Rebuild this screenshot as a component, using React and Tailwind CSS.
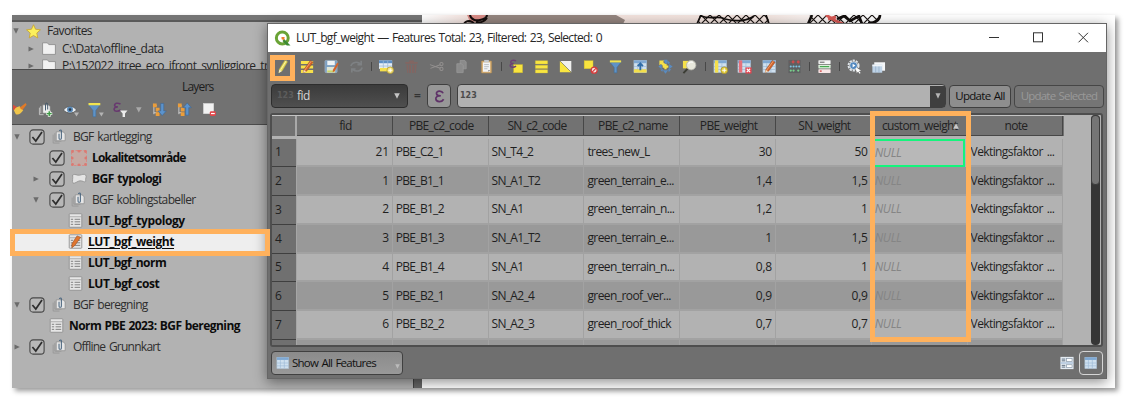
import React from "react";

const Svg = ({ s = 16, children, className = "" }) => (
  <svg width={s} height={s} viewBox="0 0 16 16" fill="none" className={"shrink-0 " + className}>
    {children}
  </svg>
);

const pencil = (c = "#d2622a", e = "#f0a070") => (
  <>
    <path d="M4 11.5 L11 1.5 L14 3.5 L7 13 L3.5 14.5Z" fill={c} stroke="#8a4a28" strokeWidth=".5" />
    <path d="M5 12 L12 2.3" stroke={e} strokeWidth="1" />
    <path d="M3.4 14.6 L4 11.8 L6.8 13Z" fill="#f3dfc0" />
  </>
);
const sheet = (
  <>
    <rect x="1" y="1.5" width="13.5" height="13" fill="#cfe0ef" stroke="#a9bccd" strokeWidth=".6" />
    <rect x="1" y="1.5" width="13.5" height="3" fill="#7fa8d3" />
    <path d="M5 4.5V14M9.5 4.5V14M1 8H14.5M1 11.2H14.5" stroke="#9bb8d4" strokeWidth=".7" />
  </>
);

const TOOLS = {
  edit: (
    <>
      <path d="M4.5 11 L10.5 1.2 L13.5 2.8 L7.8 12.6 L4 15Z" fill="#e6d954" stroke="#a99e45" strokeWidth=".5" />
      <path d="M6 11.5 L12 1.9" stroke="#fbf6ae" strokeWidth="1" />
      <path d="M4 15 L4.5 11.5 L7.4 12.9Z" fill="#f4ecd2" />
    </>
  ),
  multi: (
    <>
      <path d="M1 2.2H14V5.4H1ZM1 6.9H14V10.1H1ZM1 11.6H14V14.8H1Z" fill="#f7e04a" />
      {pencil()}
    </>
  ),
  save: (
    <>
      <rect x="1" y="1.5" width="13" height="13" rx="1" fill="#7c9fc2" stroke="#a5b8ca" strokeWidth=".6" />
      <rect x="3.5" y="2" width="8" height="4.5" fill="#eef2f5" />
      <rect x="3" y="8.5" width="9" height="6" fill="#dfe4d6" />
      <path d="M3.5 12.2H11.5V14.2H3.5Z" fill="#c9d66b" />
      <path d="M9.5 11.5L14 4L15.8 5L11.5 12.8L9.3 14Z" fill="#d2622a" />
    </>
  ),
  reload: (
    <g stroke="#84888b" strokeWidth="1.7">
      <path d="M2 7.5C3 3.5 9 2 12.5 5.5M13 1.8V6H9M14 9C13 13 7.5 14.2 3.8 11M3 14.5V10.6H7" />
    </g>
  ),
  addf: (
    <>
      <rect x="0" y="1.5" width="14" height="9" fill="#e6eef5" />
      <rect x="0" y="1.5" width="14" height="3" fill="#5d8fc4" />
      <path d="M0 7.5H14M4.6 2V11M9.3 2V11" stroke="#9cb9d6" strokeWidth=".8" />
      <path d="M1 9.5H11V13.2H1Z" fill="#f4df4a" />
      <circle cx="12" cy="12" r="3.5" fill="#f3e27e" stroke="#b39a2c" strokeWidth=".8" />
      <path d="M12 10V14M10 12H14" stroke="#fff" strokeWidth="1" />
    </>
  ),
  trash: (
    <g fill="#8a635e">
      <path d="M1.5 3.2H14.5V5H1.5ZM5.5 1.5H10.5V3.5H5.5Z" />
      <path d="M2.5 6H4.5V15H3.4ZM5.5 6H7.4V15H5.5ZM8.6 6H10.5V15H8.6ZM11.5 6H13.5L12.6 15H11.5Z" />
    </g>
  ),
  cut: (
    <g stroke="#a09c9b" strokeWidth="1.1">
      <path d="M1 6L12 9.8M1.5 10L12 6.2" />
      <circle cx="13.3" cy="5.4" r="1.7" />
      <circle cx="13.3" cy="10.6" r="1.7" />
    </g>
  ),
  copy: (
    <g fill="#959595" stroke="#adadad" strokeWidth=".7">
      <path d="M6.5 1.5H11.5L13 3.2V10.5H6.5Z" />
      <path d="M3 5H8L9.8 7V14.5H3Z" />
    </g>
  ),
  paste: (
    <>
      <rect x="2.5" y="2" width="11" height="13" rx=".6" fill="#d7ae72" stroke="#a88856" strokeWidth=".6" />
      <rect x="4.2" y="3.6" width="7.6" height="10" fill="#f3f4f5" />
      <rect x="5.5" y="1" width="5" height="2.6" fill="#c6c9cc" />
      <path d="M5.5 6H10.5M5.5 8.2H10.5M5.5 10.4H9" stroke="#a6abb0" strokeWidth=".8" />
      <path d="M10 13.6V11.6H11.8Z" fill="#777" />
    </>
  ),
  selExpr: (
    <>
      <rect x="5" y="6" width="9.5" height="8.7" fill="#f9e43e" stroke="#c7b52f" strokeWidth=".5" />
      <path d="M7.5 2C5 .6 1.3 1.4 2 3.7C2.4 4.7 4 4.8 5 4.8C2.5 4.8 .8 5.6 1.3 7.5C1.8 9.3 5.5 9.1 7.5 7.6" stroke="#6d3f74" strokeWidth="1.6" />
    </>
  ),
  selAll: <path d="M1.5 1.8H14.5V5.2H1.5ZM1.5 6.6H14.5V10H1.5ZM1.5 11.4H14.5V14.8H1.5Z" fill="#f9e640" stroke="#d4c238" strokeWidth=".4" />,
  invert: (
    <>
      <path d="M2 2H14.2V14.2Z" fill="#f0f0ee" />
      <path d="M2 2V14.2H14.2Z" fill="#f9e640" />
      <path d="M2 2L14.2 14.2" stroke="#6b6b60" strokeWidth=".6" />
    </>
  ),
  desel: (
    <>
      <rect x="1.2" y="1.8" width="9.5" height="8.6" fill="#f9e43e" stroke="#c7b52f" strokeWidth=".4" />
      <circle cx="11.9" cy="11.9" r="3.2" fill="#f3dede" stroke="#d63b3b" strokeWidth="1.3" />
      <path d="M9.8 14L14 9.8" stroke="#d63b3b" strokeWidth="1.2" />
    </>
  ),
  filter: (
    <>
      <path d="M2.2 3.5H13.8L9.5 9V14.7H6.6V9Z" fill="#5f93c6" stroke="#3f6f9f" strokeWidth=".6" />
      <rect x="2" y="1.5" width="12" height="2.2" fill="#f2e44f" />
    </>
  ),
  top: (
    <>
      {sheet}
      <rect x="1" y="11" width="13.5" height="3.5" fill="#f4df4a" />
      <path d="M7.8 12V5.2M5 7.6L7.8 4.6L10.6 7.6" stroke="#2f6ca8" strokeWidth="1.9" />
    </>
  ),
  pan: (
    <>
      <path d="M8 5V11M5 8H11" stroke="#f6e14a" strokeWidth="2.4" />
      <path d="M10.2 1.6L13 4.2L10.4 5.5ZM11.8 5.2L15.6 8L11.8 10.8ZM5.2 12L8 15.6L10.8 12ZM4 5.2L.4 8L4 10.8ZM10.8 10.3L14 11L11.5 14ZM6 .9H10V4L8 5.6ZM2.4 11.5L5.5 10.6L4.6 13.6Z" fill="#5a8bc0" />
      <path d="M1.5 1.5H6.6L5.4 3.2L8.4 6.2L6.2 8.2L3.2 5.2L1.5 6.6Z" fill="#f6e14a" />
    </>
  ),
  zoomsel: (
    <>
      <rect x="1" y="2" width="7" height="8" fill="#f6e14a" />
      <path d="M5.8 10.5L1.5 15" stroke="#3c3d35" strokeWidth="2.1" />
      <circle cx="9.8" cy="6.6" r="5" fill="#e8e8dc" stroke="#b5b6ac" strokeWidth=".9" />
      <path d="M7 5C8 3.2 10 3 11.5 3.6" stroke="#fff" strokeWidth="1.2" />
    </>
  ),
  newField: (
    <>
      {sheet}
      <rect x="2" y="1.5" width="3.6" height="13" fill="#f4df4a" />
      <circle cx="12" cy="12" r="3.6" fill="#e5cf3d" stroke="#a58f29" strokeWidth=".8" />
      <path d="M12 9.8V14.2M9.8 12H14.2" stroke="#fff" strokeWidth="1" />
    </>
  ),
  delField: (
    <>
      {sheet}
      <rect x="2" y="1.5" width="3.6" height="13" fill="#e5717b" />
      <rect x="9" y="9" width="6.5" height="6.5" fill="#e3444f" />
      <path d="M10.4 10.4L14 14M14 10.4L10.4 14" stroke="#fff" strokeWidth="1.2" />
    </>
  ),
  organize: (
    <>
      {sheet}
      {pencil()}
    </>
  ),
  calc: (
    <>
      <rect x="1.5" y="1" width="13" height="14" fill="#5e6062" />
      <g fill="#e24b4b"><circle cx="6.5" cy="3.2" r="1.5" /><circle cx="12" cy="3.2" r="1.5" /></g>
      <path d="M2 3.2H14" stroke="#8e5252" strokeWidth=".6" />
      <g fill="#7fc4e0"><circle cx="4" cy="8" r="1.1" /><circle cx="7" cy="8" r="1.1" /><circle cx="10" cy="8" r="1.1" /><circle cx="13" cy="8" r="1.1" /></g>
      <g fill="#79d08b"><circle cx="4" cy="12.3" r="1.2" /><circle cx="7" cy="12.3" r="1.2" /><circle cx="12" cy="12.3" r="1.2" /></g>
    </>
  ),
  cond: (
    <>
      <rect x="1.5" y="1.4" width="13" height="3.8" rx=".4" fill="#f4f4f4" />
      <rect x="1.5" y="6.2" width="13" height="3.8" rx=".4" fill="#ddf0dc" />
      <rect x="1.5" y="11" width="13" height="3.8" rx=".4" fill="#f8e6e6" />
      <path d="M3 3.4H8" stroke="#555" strokeWidth="1" />
      <path d="M3 8.1H13" stroke="#46a94f" strokeWidth="1.3" />
      <path d="M3 12.9H5" stroke="#c33" strokeWidth="1.3" />
    </>
  ),
  action: (
    <>
      <circle cx="7" cy="7" r="5.4" stroke="#dfe5ea" strokeWidth="2" strokeDasharray="2.4 1" />
      <circle cx="7" cy="7" r="4.4" fill="#e9eef3" />
      <circle cx="7" cy="7" r="3.6" fill="#5288bf" />
      <path d="M6 5L9 7L6 9Z" fill="#fff" />
      <path d="M9.5 9L15 12.2L12.7 12.7L14.5 15L13.4 15.6L11.8 13.3L10.4 14.8Z" fill="#fff" />
    </>
  ),
  dock: (
    <>
      <rect x="2.4" y="3.5" width="11.5" height="9" fill="#f4f6f8" />
      <rect x=".4" y="6" width="10.5" height="8.6" fill="#bed3e7" />
      <rect x=".4" y="6" width="10.5" height="1.8" fill="#eef3f8" />
      <path d="M3.9 8V14.6M7.4 8V14.6" stroke="#8fa9c2" strokeWidth=".7" />
    </>
  ),
};

const ORDER = [
  "edit", "multi", "save", "reload", "|", "addf", "trash", "cut", "copy", "paste", "|",
  "selExpr", "selAll", "invert", "desel", "filter", "top", "pan", "zoomsel", "|",
  "newField", "delField", "organize", "calc", "|", "cond", "|", "action", "dock",
];

const Arrow = ({ open, className = "" }) => (
  <svg width="6" height="6" viewBox="0 0 6 6" className={"shrink-0 " + className}>
    {open === false ? <path d="M.5 .5L5.8 3L.5 5.5Z" fill="#6b6b6b" /> : <path d="M.3 .3H5.7L3 5.7Z" fill="#6b6b6b" />}
  </svg>
);

const Check = () => (
  <Svg s={16}>
    <rect x=".9" y=".9" width="14.2" height="14.2" rx="3.2" fill="#b7b7b7" stroke="#484848" strokeWidth="1.1" />
    <path d="M3.4 8L6.8 12L13 3" stroke="#2d2d2d" strokeWidth="1.7" />
  </Svg>
);

const Group = () => (
  <Svg s={15}>
    <path d="M1.2 6V15H8M3 4.5V13H10" stroke="#979797" strokeWidth=".9" />
    <path d="M4.5 3H11.8L14 5V12.5H4.5Z" fill="#e6e6e6" stroke="#8b8b8b" strokeWidth=".8" />
    <path d="M7.5 5V9.8C7.5 11.3 10 11.3 10 9.8V2.2C10 .6 8 .6 8 2.2" stroke="#49657f" strokeWidth="1.1" />
  </Svg>
);

const TableIcon = ({ editing }) => (
  <Svg s={15}>
    <rect x="1.3" y=".8" width="13.4" height="14.4" rx=".8" fill="#e6e6e6" stroke="#8d8d8d" strokeWidth=".9" />
    <path d="M1.3 4H14.7" stroke="#a2a2a2" strokeWidth=".9" />
    <path d="M3 6.7H5.5M7 6.7H13M3 9.4H5.5M7 9.4H13M3 12.1H5.5M7 12.1H13" stroke="#7b7b7b" strokeWidth="1" />
    {editing && <path d="M4.2 10.5L9.6 2L13.5 3.5L7.5 12L4 14.8Z" fill="#e0752e" stroke="#944a1e" strokeWidth=".6" />}
  </Svg>
);

const Area = () => (
  <Svg s={16}>
    <rect x=".5" y=".5" width="15" height="15" fill="#c4aaa4" stroke="#d98a84" strokeDasharray="2.4 1.6" />
    <g fill="#da7a73">
      <circle cx="1.5" cy="1.5" r="1.4" /><circle cx="8" cy="1" r="1.6" /><circle cx="14.5" cy="1.5" r="1.4" />
      <circle cx="1" cy="8" r="1.6" /><circle cx="15" cy="8" r="1.6" />
      <circle cx="1.5" cy="14.5" r="1.4" /><circle cx="8" cy="15" r="1.6" /><circle cx="14.5" cy="14.5" r="1.4" />
    </g>
  </Svg>
);

const Poly = () => (
  <Svg s={16}>
    <path d="M1.5 4C4 2.5 6 4.6 8.4 4.2C11 3.8 13 2.4 14.8 4.2C15.8 6 14 7.5 14.8 10.4C14 12 11.5 9.5 9 9.8C6.5 10 4.5 12.5 2 12.3C.6 10 2.5 7 1.5 4Z" fill="#e4e4e4" stroke="#8f8f8f" strokeWidth=".8" />
  </Svg>
);

const Folder = () => (
  <svg width="14" height="13" viewBox="0 0 14 13" className="shrink-0">
    <path d="M.6 .8H5.4L6.8 2.6H13.4V12.4H.6Z" fill="#f1f1f1" stroke="#858585" strokeWidth=".8" />
  </svg>
);

const Row = ({ pad, children }) => <div className={"flex h-[21.05px] shrink-0 items-center " + pad}>{children}</div>;

const LayerTools = () => (
  <div className="flex h-[30px] items-center pt-px">
    <div className="w-[25px] pl-px">
      <Svg s={15}>
        <path d="M0 3L6 6L3 10L0 8Z" fill="#d64d3c" />
        <path d="M1 9C3 5 5 5.5 7 4.5L11 8.5C9 12 6 14 3 13Z" fill="#f0c54a" />
        <path d="M7 6L13.5 1L14.5 3L10 8.5Z" fill="#e07a28" />
      </Svg>
    </div>
    <div className="w-[25px] pl-px">
      <Svg s={15}>
        <path d="M1.5 6V13.5H6M3 4.5V12" stroke="#c3c3c3" strokeWidth="1" />
        <path d="M5 3H11L13 5V12H5Z" fill="#eee" stroke="#777" strokeWidth=".7" />
        <path d="M8 9V2.5C8 .8 10.3 .8 10.3 2.5V8" stroke="#3d5469" strokeWidth="1" />
        <path d="M12 9.2V15.6M8.8 12.4H15.2" stroke="#e6f4e6" strokeWidth="3" />
        <path d="M12 9.8V15M9.4 12.4H14.6" stroke="#3f9a46" strokeWidth="1.5" />
      </Svg>
    </div>
    <div className="w-[25px] pl-px">
      <Svg s={16}>
        <path d="M.5 8C3 3.5 11 3.3 13.5 8C11 12 3 12 .5 8Z" fill="#e8edf1" stroke="#555" strokeWidth=".9" />
        <circle cx="7" cy="7.6" r="3" fill="#5b8bb9" />
        <circle cx="7" cy="7.6" r="1.3" fill="#26384a" />
        <path d="M11 10.5H16L13.5 14.5Z" fill="#b4b4b4" />
      </Svg>
    </div>
    <div className="w-[25px] pl-px">
      <Svg s={16}>
        <path d="M.6 3H12L7.8 8.5V14.7H5V8.5Z" fill="#5f93c6" stroke="#3f6f9f" strokeWidth=".5" />
        <rect x=".5" y="1" width="11.8" height="2.3" fill="#f2e44f" />
        <path d="M11 10.5H15.8L13.4 14.5Z" fill="#b4b4b4" />
      </Svg>
    </div>
    <div className="w-[22px] pl-px">
      <Svg s={16}>
        <path d="M7.5 2.2C5 .4 1 1.2 1.7 3.7C2 4.7 3.6 5 4.8 4.9C2.5 5 .8 6 1.2 7.8C1.7 9.9 5.6 9.4 7.6 8" stroke="#68396f" strokeWidth="1.6" />
        <path d="M7 8.5H14.5L12 11.6V15H9.6V11.6Z" fill="#ececec" />
      </Svg>
    </div>
    <div className="flex w-[18px] pl-[2px]"><svg width="6" height="6" viewBox="0 0 6 6"><path d="M0 .3H5.6L2.8 5.6Z" fill="#a9a9a9" /></svg></div>
    <div className="w-[25px]">
      <Svg s={15}>
        <path d="M2 2V13M2 4H5M2 11.5H5" stroke="#cfcfcf" strokeWidth="1" />
        <path d="M1 1.5H5V5.5H1ZM4 6H8V10H4ZM4 11H8V15H4Z" fill="#eb9d3a" />
        <path d="M9.3 1.5H12.5V9.5H15.2L10.9 14.5L6.6 9.5H9.3Z" fill="#5c93cc" stroke="#39689a" strokeWidth=".6" />
      </Svg>
    </div>
    <div className="w-[25px]">
      <Svg s={15}>
        <path d="M2 2V13M2 4H5M2 11.5H5" stroke="#cfcfcf" strokeWidth="1" />
        <path d="M1 1.5H5V5.5H1ZM4 6H8V10H4ZM4 11H8V15H4Z" fill="#eb9d3a" />
        <path d="M9.3 14H12.5V6H15.2L10.9 1L6.6 6H9.3Z" fill="#5c93cc" stroke="#39689a" strokeWidth=".6" />
      </Svg>
    </div>
    <Svg s={15}>
      <rect x="1.5" y="1.5" width="11" height="11" fill="#f1f1f1" stroke="#d8d8d8" strokeWidth=".5" />
      <rect x="8.3" y="9.8" width="6.5" height="5" rx="1.5" fill="#e2474b" />
      <path d="M9.6 12.3H13.6" stroke="#fff" strokeWidth="1.3" />
    </Svg>
  </div>
);

const LeftDock = () => (
  <div className="flex w-[410px] shrink-0 flex-col bg-[#b2b2b2]">
    <div className="h-[7px] shrink-0 border-b-2 border-[#5a5a5a] bg-[#757575]" />
    <div className="flex h-[47px] shrink-0 flex-col overflow-hidden text-[12px] text-[#262626]">
      <div className="flex h-[18px] shrink-0 items-center pl-px">
        <Arrow />
        <svg width="15" height="15" viewBox="0 0 16 16" className="ml-[7px] shrink-0">
          <path d="M8 .8L10.2 5.6L15.4 6.2L11.5 9.7L12.6 14.9L8 12.3L3.4 14.9L4.5 9.7L.6 6.2L5.8 5.6Z" fill="#fbf05c" stroke="#c9a52f" strokeWidth=".9" />
        </svg>
        <span className="ml-[6px] tracking-[-0.65px]">Favorites</span>
      </div>
      <div className="flex h-[17px] shrink-0 items-center pl-[16px]">
        <Arrow open={false} />
        <span className="ml-[8px] flex"><Folder /></span>
        <span className="ml-[6px] tracking-[-0.5px]">C:\Data\offline_data</span>
      </div>
      <div className="flex h-[17px] shrink-0 items-center whitespace-nowrap pl-[16px]">
        <Arrow open={false} />
        <span className="ml-[8px] flex"><Folder /></span>
        <span className="ml-[6px] tracking-[-0.52px]">P:\152022_itree_eco_ifront_synliggiore_tr</span>
      </div>
    </div>
    <div className="flex h-[56px] shrink-0 flex-col border-y border-[#4c4c4c] bg-[#727272]">
      <div className="flex h-[25px] items-end pl-[170px] text-[12px] leading-[17px] tracking-[-0.8px] text-[#1d1d1d]">Layers</div>
      <LayerTools />
    </div>
    <div className="flex grow">
      <div className="flex grow flex-col whitespace-nowrap pt-px text-[12px] text-[#2e2e2e]">
        <Row pad="pl-[2px]"><Arrow /><span className="ml-[9px] flex gap-[7px]"><Check /><Group /></span><span className="ml-[6px] tracking-[-0.68px] [word-spacing:1.2px]">BGF kartlegging</span></Row>
        <Row pad="pl-[37px]"><Check /><span className="ml-[6px] flex"><Area /></span><b className="ml-[5px] tracking-[-0.8px] text-[#0c0c0c]">Lokalitetsområde</b></Row>
        <Row pad="pl-[21px]"><Arrow open={false} /><span className="ml-[10px] flex gap-[6px]"><Check /><Poly /></span><b className="ml-[5px] tracking-[-0.55px] text-[#0c0c0c] [word-spacing:1px]">BGF typologi</b></Row>
        <Row pad="pl-[21px]"><Arrow /><span className="ml-[10px] flex gap-[6px]"><Check /><Group /></span><span className="ml-[6px] tracking-[-0.63px] [word-spacing:1.2px]">BGF koblingstabeller</span></Row>
        <Row pad="pl-[56px]"><TableIcon /><b className="ml-[5px] tracking-[-0.42px] text-[#0c0c0c]">LUT_bgf_typology</b></Row>
        <div className="flex h-[21.05px] shrink-0 items-center bg-[#eeeeee] pl-[56px]"><TableIcon editing /><b className="ml-[5px] tracking-[-0.47px] text-[#0c0c0c] underline underline-offset-2">LUT_bgf_weight</b></div>
        <Row pad="pl-[56px]"><TableIcon /><b className="ml-[5px] tracking-[-0.5px] text-[#0c0c0c]">LUT_bgf_norm</b></Row>
        <Row pad="pl-[56px]"><TableIcon /><b className="ml-[5px] tracking-[-0.43px] text-[#0c0c0c]">LUT_bgf_cost</b></Row>
        <Row pad="pl-[2px]"><Arrow /><span className="ml-[9px] flex gap-[7px]"><Check /><Group /></span><span className="ml-[6px] tracking-[-0.68px] [word-spacing:1.2px]">BGF beregning</span></Row>
        <Row pad="pl-[37px]"><TableIcon /><b className="ml-[5px] tracking-[-0.55px] text-[#0c0c0c] [word-spacing:0.7px]">Norm PBE 2023: BGF beregning</b></Row>
        <Row pad="pl-[2px]"><Arrow open={false} /><span className="ml-[9px] flex gap-[7px]"><Check /><Group /></span><span className="ml-[6px] tracking-[-0.75px] [word-spacing:1.2px]">Offline Grunnkart</span></Row>
      </div>
      <div className="w-[9px] border-l border-[#444] bg-[#666]" />
    </div>
  </div>
);

const MapStrip = () => (
  <svg width="693" height="9" viewBox="0 0 693 9" className="block">
    <defs>
      <pattern id="hatch" width="9" height="9" patternUnits="userSpaceOnUse">
        <path d="M0 0L9 9M9 0L0 9" stroke="#17110f" strokeWidth="1.2" />
      </pattern>
      <linearGradient id="fade"><stop offset="0" stopColor="#fff" /><stop offset=".12" stopColor="#f2dfda" /><stop offset=".8" stopColor="#f2e4df" /><stop offset="1" stopColor="#fff" /></linearGradient>
    </defs>
    <rect width="430" height="9" fill="url(#fade)" />
    <path d="M52 0H194L203 5L201 9H45Z" fill="#94857f" />
    <path d="M45 0H64L58 6L48 7Z" fill="#d98c87" />
    <path d="M48 0C49 5 54 6 58 5C63 4 65 3 65 0M42 9C44 5 50 5 52 9M54 7C58 8 62 7 65 3" stroke="#150d0c" strokeWidth="2" fill="none" />
    <path d="M278 0H345L348 9H275Z" fill="url(#hatch)" />
    <path d="M279 0L275 9M279 1C290 5 296 0 303 4C314 7 326 6 332 1M344 0L347 9" stroke="#120e0d" strokeWidth="1.8" fill="none" />
    <path d="M388 0H458C458 6 452 8 446 9H386Z" fill="url(#hatch)" />
    <path d="M404 0L412 5L421 9M406 4L414 2" stroke="#d85a55" strokeWidth="3" />
    <path d="M390 0L386 9M415 4L422 1L428 6L437 1L440 9M458 0C458 6 452 8 446 8" stroke="#120e0d" strokeWidth="2.6" fill="none" />
  </svg>
);

const COLS = ["fid", "PBE_c2_code", "SN_c2_code", "PBE_c2_name", "PBE_weight", "SN_weight", "custom_weight", "note"];
const DATA = [
  ["21", "PBE_C2_1", "SN_T4_2", "trees_new_L", "30", "50"],
  ["1", "PBE_B1_1", "SN_A1_T2", "green_terrain_e...", "1,4", "1,5"],
  ["2", "PBE_B1_2", "SN_A1", "green_terrain_n...", "1,2", "1"],
  ["3", "PBE_B1_3", "SN_A1_T2", "green_terrain_e...", "1", "1,5"],
  ["4", "PBE_B1_4", "SN_A1", "green_terrain_n...", "0,8", "1"],
  ["5", "PBE_B2_1", "SN_A2_4", "green_roof_ver...", "0,9", "0,9"],
  ["6", "PBE_B2_2", "SN_A2_3", "green_roof_thick", "0,7", "0,7"],
  ["", "", "", "", "", ""],
];

const DataTable = () => (
  <div className="ml-[2px] mr-[3px] flex h-[234px] shrink-0 rounded-[3px] border-2 border-[#4e4e4e] bg-[#b2b2b2] text-[12px] text-[#1f1f1f]">
    <div className="flex h-[230px] w-[792px] shrink-0 flex-col overflow-hidden border-t border-[#c4c4c4]">
      <div className="flex h-[20px] shrink-0 bg-[#727272]">
        <div className="w-[25px] shrink-0 border-r-2 border-[#a9a9a9]" />
        {COLS.map((c) => (
          <div key={c} className="flex w-[95.8px] shrink-0 items-center justify-center border-b border-r border-[#474747] pl-[2px] tracking-[-0.66px] text-[#222]">
            <span className={c === "custom_weight" ? "pl-px" : ""}>{c}</span>
            {c === "custom_weight" && <svg width="6" height="6" viewBox="0 0 6 6" className="-ml-[4px]"><path d="M3 .3L5.8 5.8H.2Z" fill="#c9c9c9" /></svg>}
          </div>
        ))}
      </div>
      <div className="h-[2.5px] shrink-0" />
      {DATA.map((r, ri) => (
        <div key={ri} className="flex h-[28.75px] shrink-0">
          <div className="flex w-[24px] shrink-0 items-center border-b border-[#3f3f3f] bg-[#707070] pl-[3px]">{ri < 7 ? ri + 1 : ""}</div>
          <div className="w-px shrink-0 bg-[#a6a6a6]" />
          {COLS.map((c, i) => {
            const first = ri === 0 && i === 6;
            return (
              <div
                key={c}
                className={
                  "flex shrink-0 items-center whitespace-nowrap " +
                  (first
                    ? "mr-[2.8px] w-[93px] border-2 border-[#14f57c] bg-[#b8b8b8] "
                    : "w-[95.8px] border-b-2 border-r border-[#a2a2a2] " + (ri % 2 ? "bg-[#999] " : "bg-[#b2b2b2] ")) +
                  (i === 0 || i === 4 || i === 5 ? "justify-end pr-[3px] tracking-[-0.2px]" : first ? "pl-[1px]" : "pl-[3px]") +
                  (i === 3 ? " tracking-[-0.58px]" : i === 7 ? " tracking-[-0.6px] [word-spacing:1.5px]" : i === 1 || i === 2 ? " tracking-[-0.7px]" : "")
                }
              >
                {i < 6 ? r[i] : ri === 7 ? "" : i === 6 ? <i className="tracking-[-0.35px] text-[#858585]">NULL</i> : "Vektingsfaktor ..."}
              </div>
            );
          })}
        </div>
      ))}
    </div>
    <div className="grow" />
    <div className="mr-px w-[9px] rounded bg-[#363636]">
      <div className="h-[70px] rounded border border-[#3c3c3c] bg-[#757575]" />
    </div>
  </div>
);

const Dialog = () => (
  <div className="absolute left-[255px] top-[8px] flex h-[356px] w-[840px] flex-col overflow-hidden border border-[#666] bg-[#6f6f6f] shadow-[0_3px_12px_rgba(0,0,0,0.45)]">
    <div className="flex h-[28px] shrink-0 items-center bg-white pl-[6px] pr-[17px]">
      <Svg s={17}>
        <circle cx="7.8" cy="7.5" r="5.6" stroke="#6aa336" strokeWidth="2.8" />
        <path d="M9.5 8.5L15.5 14.5H12L8 10.3Z" fill="#3c8a34" />
        <path d="M7 6.5H10L9.6 9.7L7.2 8.6Z" fill="#ee7f2e" />
      </Svg>
      <span className="ml-[5px] text-[12px] tracking-[-0.68px] text-[#262626] [word-spacing:1px]">LUT_bgf_weight — Features Total: 23, Filtered: 23, Selected: 0</span>
      <svg width="100" height="12" viewBox="0 0 100 12" className="ml-auto" fill="none" stroke="#333" strokeWidth="1">
        <path d="M0 5.5H10M89.5 .8L99 10.3M99 .8L89.5 10.3" />
        <rect x="44.5" y=".8" width="9" height="9" />
      </svg>
    </div>
    <div className="flex h-[32px] shrink-0 items-center pl-[2px] pb-[3px]">
      {ORDER.map((k, i) =>
        k === "|" ? (
          <div key={i} className="flex w-[5.4px] shrink-0 justify-center"><div className="h-[9px] w-px bg-[#484848]" /></div>
        ) : (
          <div key={i} className="flex w-[24.8px] shrink-0 items-center justify-center">
            <Svg s={15} className={k === "reload" || k === "trash" || k === "copy" || k === "cut" ? "opacity-75" : ""}>{TOOLS[k]}</Svg>
          </div>
        )
      )}
    </div>
    <div className="flex h-[24px] shrink-0 items-center pl-[3px] text-[12px]">
      <div className="flex h-[24px] w-[137px] items-center rounded border border-[#2d2d2d] bg-linear-to-b from-[#3b3b3b] to-[#4f4f4f] pl-[5px] pr-[7px] text-[#d5d5d5]">
        <span className="w-[20px] font-['DejaVu_Sans'] text-[8px] font-bold text-[#5c5c5c]">123</span>
        <span className="tracking-[-0.5px] [font-variant-ligatures:none]">fid</span>
        <svg width="6" height="6" viewBox="0 0 6 6" className="ml-auto"><path d="M.2 .3H5.8L3 5.8Z" fill="#c4c4c4" /></svg>
      </div>
      <span className="w-[19px] text-center font-bold text-[#333]">=</span>
      <div className="flex h-[24px] w-[24px] items-center justify-center rounded border border-[#3f3f3f] bg-[#979797]">
        <Svg s={13}><path d="M12.5 4C11 .5 3.8 .6 4.3 4.4C4.5 6.6 6.5 7.2 9.5 7.1C5.9 7.1 3.1 8.2 3.5 11C3.9 15.2 11 15.3 13.1 11.4" stroke="#5f3268" strokeWidth="2.1" /></Svg>
      </div>
      <div className="ml-[6px] flex h-[24px] w-[489px] items-center rounded border border-[#3f3f3f] bg-[#b1b1b1] pl-[2px]">
        <span className="font-['DejaVu_Sans'] text-[8px] font-bold text-[#4c4c4c]">123</span>
        <div className="ml-auto flex h-[21px] w-[15px] items-center justify-center bg-[#3f3f3f]"><svg width="6" height="6" viewBox="0 0 6 6"><path d="M.5 .3H5.5L3 5.8Z" fill="#b5b5b5" /></svg></div>
      </div>
      <div className="ml-[3px] flex h-[23px] w-[62px] shrink-0 items-center justify-center whitespace-nowrap rounded border border-[#3f3f3f] bg-[#8e8e8e] text-[11.5px] tracking-[-0.7px] text-[#111] [word-spacing:1px]">Update All</div>
      <div className="ml-[3px] flex h-[23px] w-[90px] shrink-0 items-center justify-center whitespace-nowrap rounded border border-[#464646] bg-[#757575] text-[11.5px] tracking-[-0.8px] text-[#999] [word-spacing:1px]">Update Selected</div>
    </div>
    <div className="h-[5px] shrink-0" />
    <DataTable />
    <div className="flex grow items-center pl-[3px] pr-[3px]">
      <div className="flex h-[24px] w-[132px] items-center rounded border border-[#404040] bg-linear-to-b from-[#8b8b8b] to-[#999] pl-[4px] pr-[2px] text-[11.5px] tracking-[-0.76px] text-[#111] [word-spacing:1px]">
        <Svg s={14}>{sheet}</Svg>
        <span className="ml-[2px]">Show All Features</span>
        <svg width="5" height="5" viewBox="0 0 6 6" className="ml-auto mt-[7px]"><path d="M.2 .3H5.8L3 5.8Z" fill="#bbb" /></svg>
      </div>
      <Svg s={14} className="ml-auto">
        <rect x=".5" y="1" width="15" height="14" fill="#e4ebf2" />
        <rect x=".5" y="7.3" width="15" height="1.4" fill="#a6bfd8" />
        <path d="M2 3.5H6M2 5.5H6M2 10.7H6M2 12.7H6" stroke="#536577" strokeWidth="1" />
        <rect x="7.5" y="2.8" width="6.3" height="3.3" fill="#fff" stroke="#8898a8" strokeWidth=".8" />
        <rect x="7.5" y="10" width="6.3" height="3.3" fill="#fff" stroke="#8898a8" strokeWidth=".8" />
      </Svg>
      <div className="ml-[5px] flex h-[24px] w-[24px] items-center justify-center rounded border border-[#d5d5d5]"><Svg s={14}>{sheet}</Svg></div>
    </div>
  </div>
);

export default function App() {
  return (
    <div className="h-[412px] w-[1134px] overflow-hidden bg-white pl-[12px] pt-[15px] font-['Open_Sans','Noto_Sans',sans-serif]">
      <div className="relative flex h-[373px] w-[1103px] bg-white shadow-[3px_3px_5px_rgba(0,0,0,0.4)]">
        <LeftDock />
        <div className="grow"><MapStrip /></div>
        <Dialog />
        <div className="absolute left-[-2px] top-[214px] h-[27px] w-[260px] border-[5px] border-[#ffb15c]" />
        <div className="absolute left-[258px] top-[40px] h-[26px] w-[25px] border-[5px] border-[#ffb15c]" />
        <div className="absolute left-[858px] top-[96px] h-[231px] w-[101px] border-[5px] border-[#ffb15c]" />
      </div>
    </div>
  );
}
